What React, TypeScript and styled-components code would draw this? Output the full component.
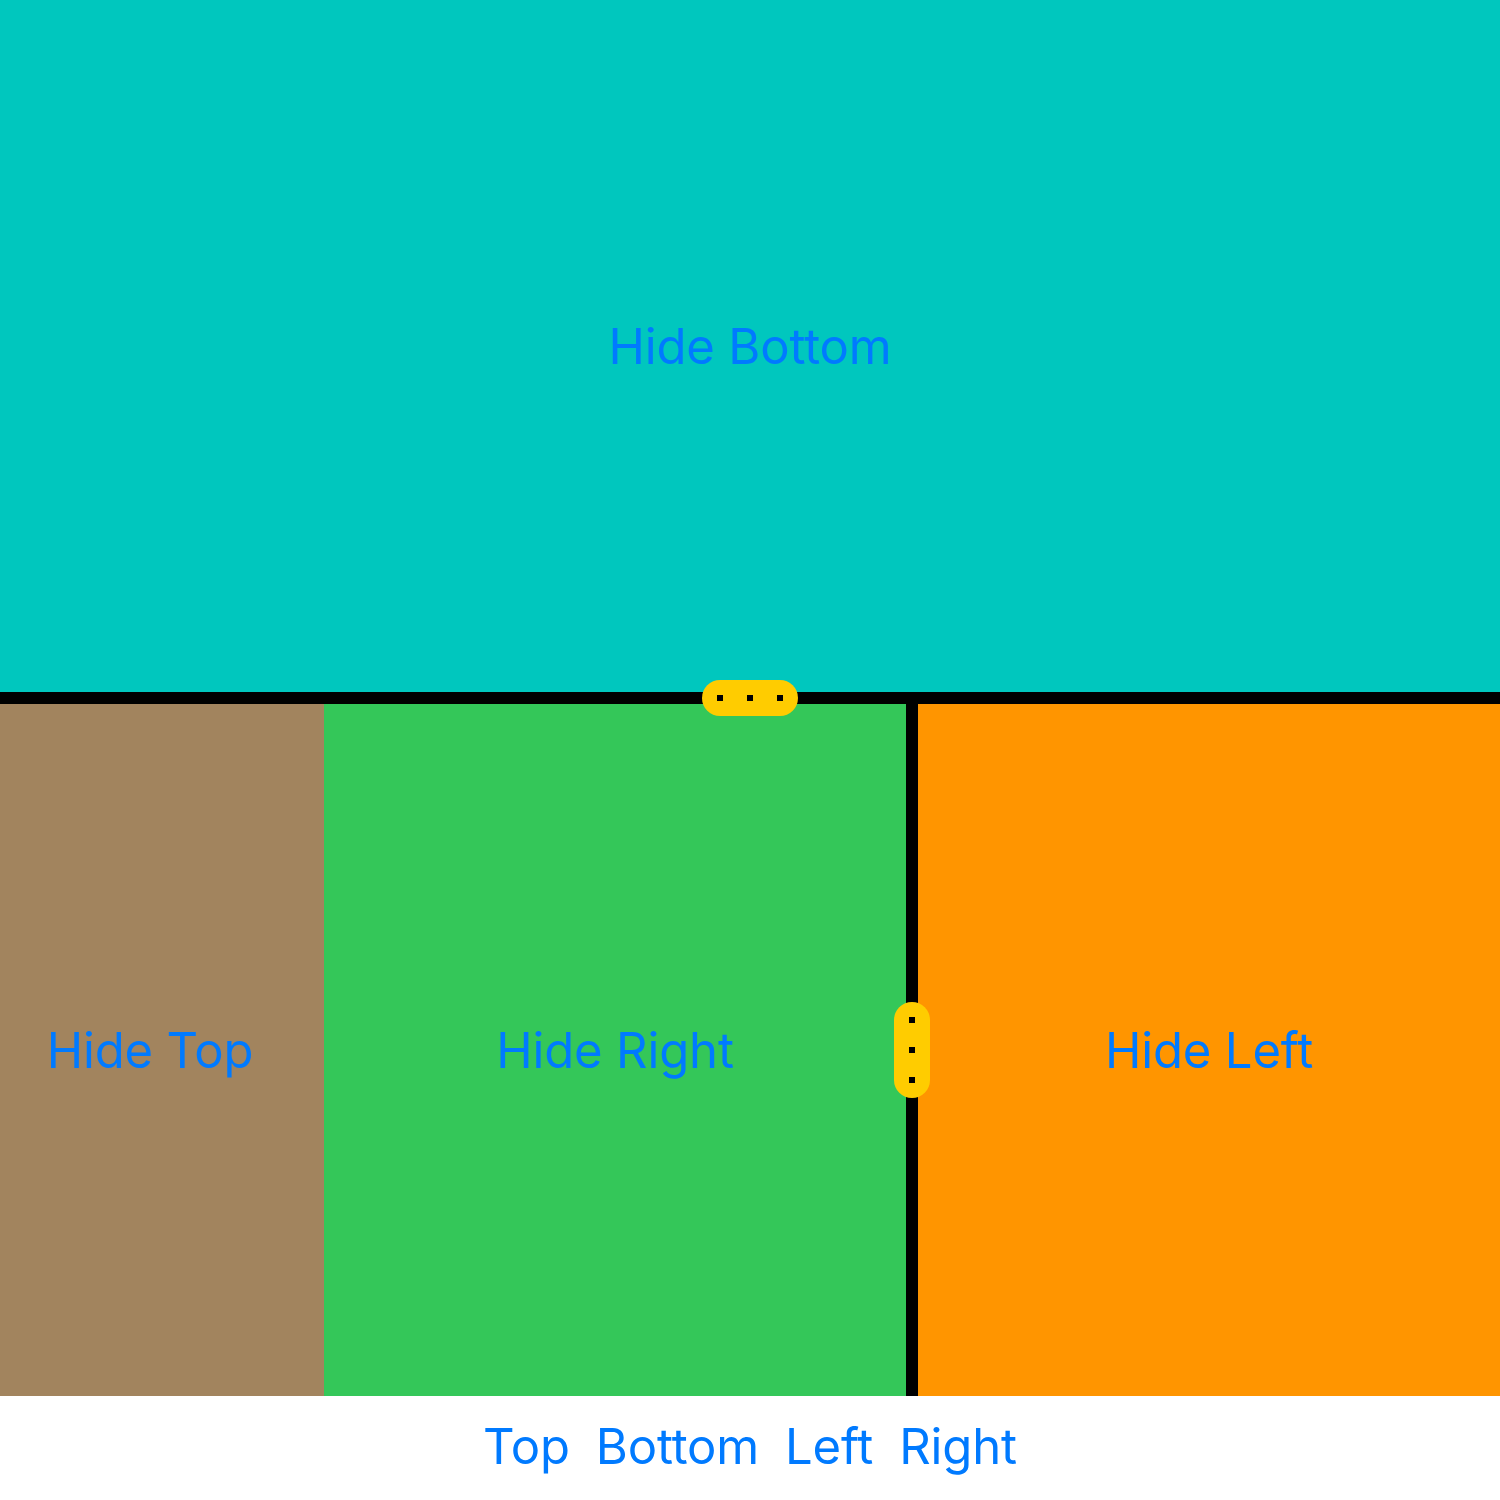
import React from "react";
import styled, { createGlobalStyle } from "styled-components";

const Global = createGlobalStyle`
  html, body { margin: 0; padding: 0; background: #fff; }
  body { font-family: Inter, "Open Sans", "Liberation Sans", sans-serif; }
`;

const Page = styled.div`
  width: 1500px;
  height: 1500px;
  display: flex;
  flex-direction: column;
`;

const Pane = styled.div<{ $bg: string; $w?: number; $padR?: number }>`
  background: ${(p) => p.$bg};
  ${(p) => (p.$w ? `width: ${p.$w}px; flex: none;` : "flex: 1;")}
  display: flex;
  align-items: center;
  justify-content: center;
  padding-right: ${(p) => p.$padR ?? 0}px;
  box-sizing: border-box;
  min-width: 0;
`;

const Label = styled.span`
  color: #007aff;
  font-size: 49px;
  letter-spacing: -0.15px;
  line-height: 1;
`;

const TopArea = styled.div`
  height: 692px;
  display: flex;
`;

const HDivider = styled.div`
  height: 12px;
  background: #000;
  position: relative;
  flex: none;
`;

const VDivider = styled.div`
  width: 12px;
  background: #000;
  position: relative;
  flex: none;
`;

const Handle = styled.div<{ $vertical?: boolean }>`
  position: absolute;
  background: #ffcc00;
  border-radius: 18px;
  display: flex;
  flex-direction: ${(p) => (p.$vertical ? "column" : "row")};
  align-items: center;
  justify-content: center;
  gap: 24px;
  ${(p) =>
    p.$vertical
      ? `width: 36px; height: 96px; left: -12px; top: 50%; transform: translateY(-50%);`
      : `width: 96px; height: 36px; top: -12px; left: 50%; transform: translateX(-50%);`}
`;

const Dot = styled.span`
  width: 6px;
  height: 6px;
  background: #000;
  display: block;
`;

const BottomArea = styled.div`
  height: 692px;
  display: flex;
`;

const Toolbar = styled.div`
  height: 104px;
  display: flex;
  justify-content: center;
  align-items: center;
  gap: 26px;
  padding-bottom: 4px;
  box-sizing: border-box;
`;

const ToolButton = styled.button`
  background: none;
  border: none;
  padding: 0;
  font-family: inherit;
  color: #007aff;
  font-size: 49px;
  letter-spacing: -0.15px;
  line-height: 1;
  cursor: pointer;
`;

export default function App() {
  return (
    <Page>
      <Global />
      <TopArea>
        <Pane $bg="#00c7be">
          <Label>Hide Bottom</Label>
        </Pane>
      </TopArea>
      <HDivider>
        <Handle>
          <Dot />
          <Dot />
          <Dot />
        </Handle>
      </HDivider>
      <BottomArea>
        <Pane $bg="#a2845e" $w={324} $padR={24}>
          <Label>Hide Top</Label>
        </Pane>
        <Pane $bg="#34c759">
          <Label>Hide Right</Label>
        </Pane>
        <VDivider>
          <Handle $vertical>
            <Dot />
            <Dot />
            <Dot />
          </Handle>
        </VDivider>
        <Pane $bg="#ff9500">
          <Label>Hide Left</Label>
        </Pane>
      </BottomArea>
      <Toolbar>
        <ToolButton>Top</ToolButton>
        <ToolButton>Bottom</ToolButton>
        <ToolButton>Left</ToolButton>
        <ToolButton>Right</ToolButton>
      </Toolbar>
    </Page>
  );
}
